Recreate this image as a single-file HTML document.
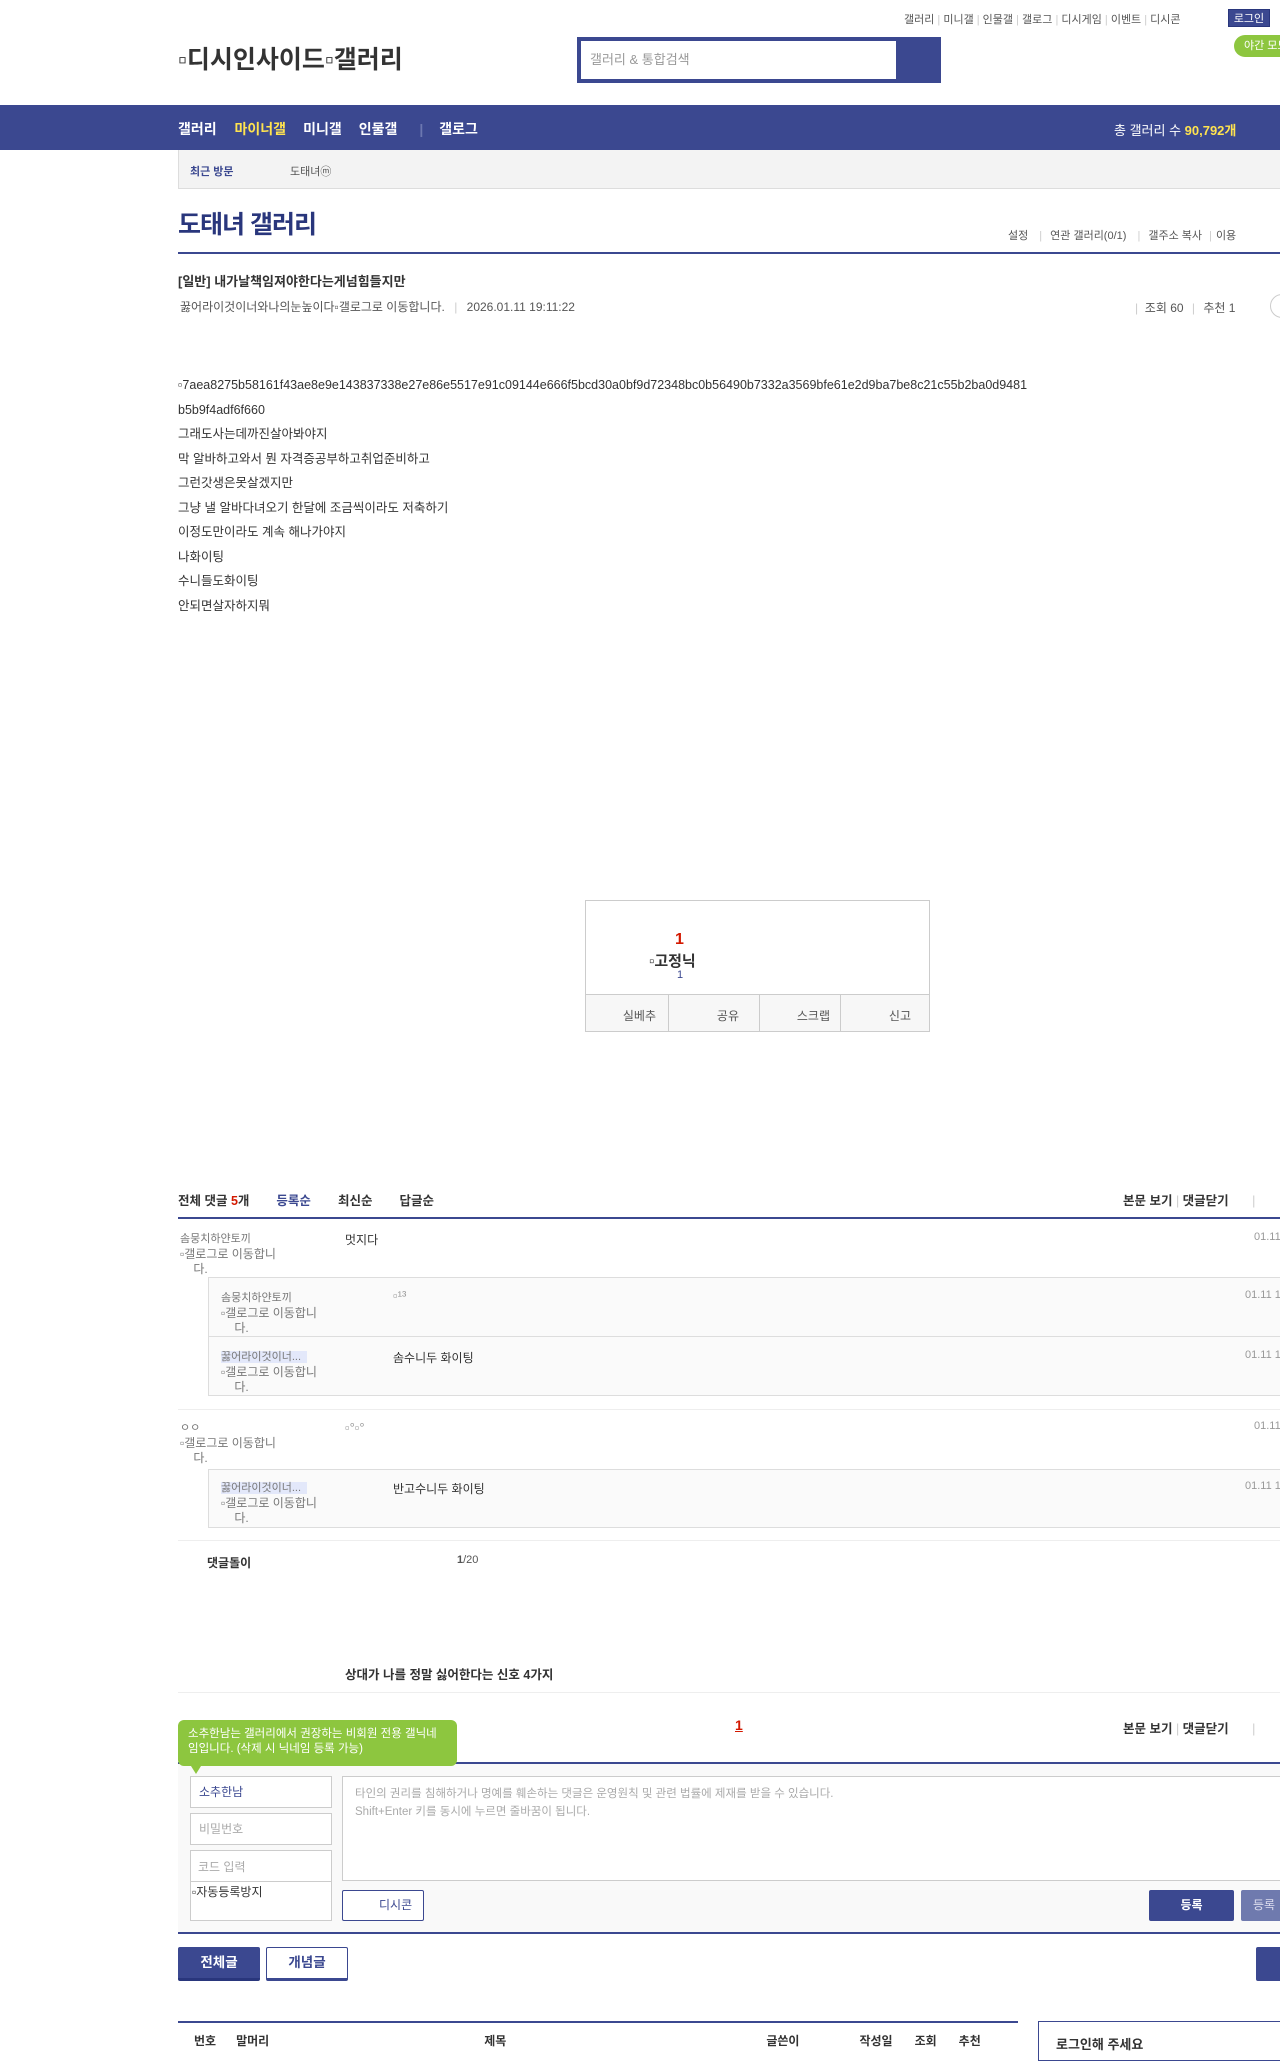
<!DOCTYPE html>
<html><head><meta charset="utf-8"><style>
*{margin:0;padding:0;box-sizing:border-box}
body{width:1280px;height:2044px;position:relative;overflow:hidden;background:#fff;font-family:"Liberation Sans","Noto Sans CJK KR",sans-serif;font-size:12px;color:#333}
.a{position:absolute;white-space:nowrap}
.nk{font-size:12px;color:#777;line-height:15px}
</style></head><body>
<div class="a" style="top:11px;left:904px;font-size:11px;color:#555">갤러리 <span style="color:#ccc">|</span> 미니갤 <span style="color:#ccc">|</span> 인물갤 <span style="color:#ccc">|</span> 갤로그 <span style="color:#ccc">|</span> 디시게임 <span style="color:#ccc">|</span> 이벤트 <span style="color:#ccc">|</span> 디시콘</div>
<div class="a" style="top:9px;left:1228px;width:42px;height:18px;background:#3b4890;color:#fff;font-size:11px;text-align:center;line-height:18px;border:1px solid #29367c">로그인</div>
<div class="a" style="top:35px;left:1234px;width:60px;height:22px;background:#8dc63f;color:#fff;border-radius:11px;font-size:11px;line-height:22px;padding-left:10px">야간 모드</div>
<div class="a" style="top:40px;left:178px;font-size:25px;font-weight:bold;color:#333">▫디시인사이드▫갤러리</div>
<div class="a" style="top:37px;left:577px;width:364px;height:46px;background:#3b4890"></div>
<div class="a" style="top:41px;left:581px;width:315px;height:38px;background:#fff;color:#999;font-size:13px;line-height:38px;padding-left:9px">갤러리 &amp; 통합검색</div>
<div class="a" style="top:105px;left:0;width:1280px;height:45px;background:#3b4890"></div>
<div class="a" style="top:119px;left:178px;font-size:14px;font-weight:bold;color:#fff">갤러리 <span style="margin-left:14px;color:#ffe34f">마이너갤</span><span style="margin-left:17px">미니갤</span><span style="margin-left:17px">인물갤</span><span style="margin-left:22px;color:#6c77b0">|</span><span style="margin-left:16px">갤로그</span></div>
<div class="a" style="top:120px;left:1114px;font-size:13px;color:#fff">총 갤러리 수 <b style="color:#ffe34f">90,792개</b></div>
<div class="a" style="top:150px;left:178px;width:1110px;height:39px;background:#f3f3f3;border:1px solid #ddd;border-top:none"></div>
<div class="a" style="top:163px;left:190px;font-size:11px;font-weight:bold;color:#3b4890">최근 방문</div>
<div class="a" style="top:163px;left:290px;font-size:11px;color:#555">도태녀ⓜ</div>
<div class="a" style="top:205px;left:178px;font-size:25px;color:#29367c;font-weight:bold;letter-spacing:-1px">도태녀 갤러리</div>
<div class="a" style="top:227px;left:1008px;font-size:11px;color:#555">설정 <span style="color:#ccc;margin:0 8px">|</span>연관 갤러리(0/1) <span style="color:#ccc;margin:0 8px">|</span>갤주소 복사 <span style="color:#ccc;margin:0 4px">|</span>이용</div>
<div class="a" style="top:252px;left:178px;width:1102px;height:2px;background:#3b4890"></div>
<div class="a" style="top:271px;left:178px;font-size:13px;font-weight:bold;color:#333">[일반] 내가날책임져야한다는게넘힘들지만</div>
<div class="a" style="top:298px;left:180px;font-size:12px;color:#555">꿇어라이것이너와나의눈높이다▫갤로그로 이동합니다. <span style="color:#ccc;margin:0 6px">|</span> 2026.01.11 19:11:22</div>
<div class="a" style="top:299px;left:1135px;font-size:12px;color:#555"><span style="color:#ccc">|</span> &nbsp;조회 60 <span style="color:#ccc;margin:0 5px">|</span> 추천 1</div>
<div class="a" style="top:294px;left:1270px;width:30px;height:24px;border:1px solid #ccc;border-radius:12px"></div>
<div class="a" style="top:373px;left:178px;font-size:12.5px;line-height:24.5px;color:#333;white-space:normal;width:900px">▫7aea8275b58161f43ae8e9e143837338e27e86e5517e91c09144e666f5bcd30a0bf9d72348bc0b56490b7332a3569bfe61e2d9ba7be8c21c55b2ba0d9481<br>b5b9f4adf6f660<br>그래도사는데까진살아봐야지<br>막 알바하고와서 뭔 자격증공부하고취업준비하고<br>그런갓생은못살겠지만<br>그냥 낼 알바다녀오기 한달에 조금씩이라도 저축하기<br>이정도만이라도 계속 해나가야지<br>나화이팅<br>수니들도화이팅<br>안되면살자하지뭐</div>
<div class="a" style="top:900px;left:585px;width:345px;height:132px;border:1px solid #ccc"></div>
<div class="a" style="top:931px;left:675px;font-size:16px;font-weight:bold;color:#d31900">1</div>
<div class="a" style="top:950px;left:649px;font-size:15px;font-weight:bold;color:#333">▫고정닉</div>
<div class="a" style="top:969px;left:677px;font-size:11px;color:#3b4890">1</div>
<div class="a" style="top:994px;left:586px;width:343px;height:37px;background:#f7f7f7;border-top:1px solid #ccc;display:flex;font-size:12px;color:#555">
<div style="flex:1;border-right:1px solid #ccc;text-align:right;padding:12px 12px 0 0">실베추</div><div style="flex:1;border-right:1px solid #ccc;text-align:right;padding:12px 20px 0 0">공유</div><div style="flex:1;border-right:1px solid #ccc;text-align:right;padding:12px 10px 0 0">스크랩</div><div style="flex:1;text-align:right;padding:12px 18px 0 0">신고</div></div>
<div class="a" style="top:1190px;left:178px;font-size:12.5px;font-weight:bold;color:#333">전체 댓글 <span style="color:#d31900">5</span>개<span style="color:#3b4890;margin-left:27px">등록순</span><span style="margin-left:27px">최신순</span><span style="margin-left:27px">답글순</span></div>
<div class="a" style="top:1190px;left:1123px;font-size:12.5px;font-weight:bold;color:#333">본문 보기 <span style="color:#ccc;font-weight:normal">|</span> 댓글닫기 <span style="color:#ccc;font-weight:normal;margin-left:20px">|</span></div>
<div class="a" style="top:1217px;left:178px;width:1102px;height:2px;background:#3b4890"></div>
<div class="a nk" style="top:1231px;left:180px"><span style="font-size:11px">솜뭉치하얀토끼</span><br>▫갤로그로 이동합니<br>&nbsp;&nbsp;&nbsp;&nbsp;다.</div>
<div class="a" style="top:1231px;left:345px;font-size:12px">멋지다</div>
<div class="a" style="top:1231px;left:1254px;font-size:11px;color:#999">01.11</div>
<div class="a" style="top:1277px;left:208px;width:1080px;height:60px;background:#fafafa;border:1px solid #ddd"></div>
<div class="a" style="top:1337px;left:208px;width:1080px;height:59px;background:#fafafa;border:1px solid #ddd;border-top:none"></div>
<div class="a nk" style="top:1290px;left:221px"><span style="font-size:11px">솜뭉치하얀토끼</span><br>▫갤로그로 이동합니<br>&nbsp;&nbsp;&nbsp;&nbsp;다.</div>
<div class="a" style="top:1288px;left:393px;font-size:13px;color:#999">▫¹³</div>
<div class="a" style="top:1289px;left:1245px;font-size:11px;color:#999">01.11 1</div>
<div class="a nk" style="top:1349px;left:221px"><span style="background:#e3e8fa;font-size:11px">꿇어라이것이너...&nbsp;&nbsp;</span><br>▫갤로그로 이동합니<br>&nbsp;&nbsp;&nbsp;&nbsp;다.</div>
<div class="a" style="top:1349px;left:393px;font-size:12px">솜수니두 화이팅</div>
<div class="a" style="top:1349px;left:1245px;font-size:11px;color:#999">01.11 1</div>
<div class="a" style="top:1409px;left:178px;width:1102px;height:1px;background:#eee"></div>
<div class="a nk" style="top:1420px;left:180px"><span style="font-size:11px">ㅇㅇ</span><br>▫갤로그로 이동합니<br>&nbsp;&nbsp;&nbsp;&nbsp;다.</div>
<div class="a" style="top:1420px;left:345px;font-size:13px;color:#999">▫°▫°</div>
<div class="a" style="top:1420px;left:1254px;font-size:11px;color:#999">01.11</div>
<div class="a" style="top:1469px;left:208px;width:1080px;height:59px;background:#fafafa;border:1px solid #ddd"></div>
<div class="a nk" style="top:1480px;left:221px"><span style="background:#e3e8fa;font-size:11px">꿇어라이것이너...&nbsp;&nbsp;</span><br>▫갤로그로 이동합니<br>&nbsp;&nbsp;&nbsp;&nbsp;다.</div>
<div class="a" style="top:1480px;left:393px;font-size:12px">반고수니두 화이팅</div>
<div class="a" style="top:1480px;left:1245px;font-size:11px;color:#999">01.11 1</div>
<div class="a" style="top:1540px;left:178px;width:1102px;height:1px;background:#eee"></div>
<div class="a" style="top:1554px;left:207px;font-size:12px;font-weight:bold">댓글돌이</div>
<div class="a" style="top:1554px;left:457px;font-size:11px;color:#555"><b>1</b>/20</div>
<div class="a" style="top:1664px;left:345px;font-size:12.5px;font-weight:bold">상대가 나를 정말 싫어한다는 신호 4가지</div>
<div class="a" style="top:1692px;left:178px;width:1102px;height:1px;background:#eee"></div>
<div class="a" style="top:1717px;left:735px;font-size:14px;font-weight:bold;color:#d31900;text-decoration:underline">1</div>
<div class="a" style="top:1718px;left:1123px;font-size:12.5px;font-weight:bold;color:#333">본문 보기 <span style="color:#ccc;font-weight:normal">|</span> 댓글닫기 <span style="color:#ccc;font-weight:normal;margin-left:20px">|</span></div>
<div class="a" style="top:1762px;left:178px;width:1102px;height:2px;background:#3b4890"></div>
<div class="a" style="top:1764px;left:178px;width:1102px;height:168px;background:#f9f9f9"></div>
<div class="a" style="top:1720px;left:178px;width:279px;height:46px;background:#8dc63f;border-radius:6px;color:#fff;font-size:11.5px;line-height:15px;padding:7px 10px;white-space:normal">소추한남는 갤러리에서 권장하는 비회원 전용 갤닉네임입니다. (삭제 시 닉네임 등록 가능)</div>
<div class="a" style="top:1766px;left:191px;width:0;height:0;border-left:5px solid transparent;border-right:5px solid transparent;border-top:8px solid #8dc63f"></div>
<div class="a" style="top:1776px;left:190px;width:142px;height:32px;background:#fff;border:1px solid #ccc;font-size:12px;color:#3b4890;line-height:30px;padding-left:8px">소추한남</div>
<div class="a" style="top:1813px;left:190px;width:142px;height:32px;background:#fff;border:1px solid #ccc;font-size:12px;color:#aaa;line-height:30px;padding-left:8px">비밀번호</div>
<div class="a" style="top:1850px;left:190px;width:142px;height:71px;background:#fff;border:1px solid #ccc"></div>
<div class="a" style="top:1858px;left:198px;font-size:12px;color:#aaa">코드 입력</div>
<div class="a" style="top:1881px;left:190px;width:142px;height:1px;background:#ccc"></div>
<div class="a" style="top:1883px;left:192px;font-size:12px;color:#333">▫자동등록방지</div>
<div class="a" style="top:1776px;left:342px;width:940px;height:105px;background:#fff;border:1px solid #ccc;font-size:11.5px;color:#aaa;line-height:18px;padding:8px 12px">타인의 권리를 침해하거나 명예를 훼손하는 댓글은 운영원칙 및 관련 법률에 제재를 받을 수 있습니다.<br>Shift+Enter 키를 동시에 누르면 줄바꿈이 됩니다.</div>
<div class="a" style="top:1890px;left:342px;width:82px;height:31px;background:#fff;border:1px solid #3b4890;border-radius:2px;font-size:12px;color:#3b4890;line-height:29px;padding-left:36px">디시콘</div>
<div class="a" style="top:1890px;left:1149px;width:85px;height:31px;background:#3b4890;border-radius:2px;color:#fff;font-size:12px;font-weight:bold;text-align:center;line-height:31px">등록</div>
<div class="a" style="top:1890px;left:1241px;width:60px;height:31px;background:#6f7aae;border-radius:2px;color:#dde;font-size:12px;line-height:31px;padding-left:12px">등록</div>
<div class="a" style="top:1932px;left:178px;width:1102px;height:2px;background:#3b4890"></div>
<div class="a" style="top:1947px;left:178px;width:82px;height:34px;background:#3b4890;border-bottom:3px solid #29367c;border-radius:2px;color:#fff;font-size:13.5px;font-weight:bold;text-align:center;line-height:32px">전체글</div>
<div class="a" style="top:1947px;left:266px;width:82px;height:34px;background:#fff;border:1px solid #3b4890;border-bottom:3px solid #3b4890;border-radius:2px;color:#3b4890;font-size:13.5px;font-weight:bold;text-align:center;line-height:30px">개념글</div>
<div class="a" style="top:1947px;left:1256px;width:40px;height:34px;background:#3b4890;border-radius:2px"></div>
<div class="a" style="top:2021px;left:178px;width:840px;height:2px;background:#3b4890"></div>
<div class="a" style="top:2032px;left:194px;font-size:12px;font-weight:bold;color:#333">번호<span style="margin-left:20px">말머리</span><span style="margin-left:215px">제목</span><span style="margin-left:260px">글쓴이</span><span style="margin-left:60px">작성일</span><span style="margin-left:22px">조회</span><span style="margin-left:22px">추천</span></div>
<div class="a" style="top:2021px;left:1038px;width:250px;height:40px;border:1px solid #3b4890"></div>
<div class="a" style="top:2034px;left:1056px;font-size:13px;font-weight:bold;color:#333">로그인해 주세요</div>
</body></html>
